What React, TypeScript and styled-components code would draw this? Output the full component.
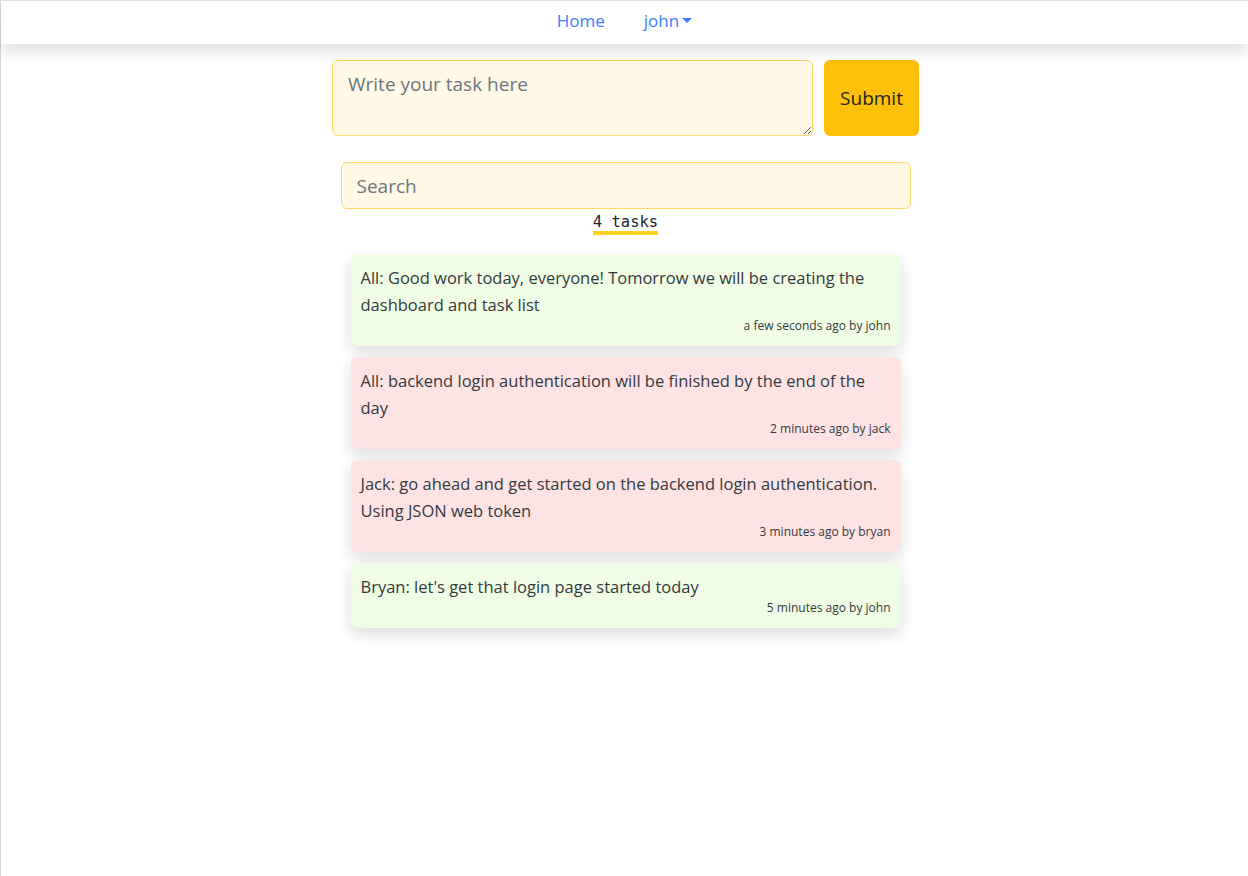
import React from "react";
import styled, { createGlobalStyle } from "styled-components";

const Global = createGlobalStyle`
  html, body { margin: 0; padding: 0; background: #fff; }
  body { font-family: "Open Sans", "Noto Sans", sans-serif; color: #212529; }
  * { box-sizing: border-box; }
`;

const Page = styled.div`
  min-height: 876px;
  border-left: 1px solid #d4d4d4;
  border-top: 1px solid #e2e2e2;
`;

const NavBar = styled.nav`
  height: 43px;
  display: flex;
  justify-content: center;
  align-items: center;
  gap: 39px;
  padding-bottom: 5px;
  background: #fff;
  box-shadow: 0 8px 16px rgba(0, 0, 0, 0.12);
  position: relative;
`;

const NavLink = styled.a`
  color: #3d7cff;
  font-size: 17px;
  text-decoration: none;
  display: flex;
  align-items: center;
  gap: 3px;
`;

const Caret = styled.span`
  display: inline-block;
  width: 0;
  height: 0;
  border-left: 5px solid transparent;
  border-right: 5px solid transparent;
  border-top: 5px solid #3d7cff;
  margin-top: 1px;
`;

const Main = styled.main`
  display: flex;
  flex-direction: column;
  align-items: center;
  padding-top: 16px;
`;

const FormRow = styled.form`
  display: flex;
  gap: 11px;
  width: 587px;
  margin-left: 2px;
`;

const TaskInput = styled.textarea`
  flex: 1;
  height: 76px;
  background: #fff9e6;
  border: 1px solid #ffd966;
  border-radius: 6px;
  padding: 10px 15px;
  font-family: inherit;
  font-size: 19px;
  color: #333;
  &::placeholder { color: #6c757d; }
`;

const SubmitButton = styled.button`
  width: 95px;
  height: 76px;
  background: #ffc107;
  border: none;
  border-radius: 6px;
  font-family: inherit;
  font-size: 19px;
  color: #212529;
`;

const SearchInput = styled.input`
  margin-top: 26px;
  width: 570px;
  height: 47px;
  margin-left: 2px;
  background: #fff9e6;
  border: 1px solid #ffd966;
  border-radius: 6px;
  padding: 0 15px;
  font-family: inherit;
  font-size: 19px;
  &::placeholder { color: #6c757d; }
`;

const Count = styled.div`
  margin-top: 5px;
  margin-left: 2px;
  font-family: "DejaVu Sans Mono", "Liberation Mono", monospace;
  font-size: 15.5px;
  line-height: 17px;
  color: #212529;
  border-bottom: 4px solid #ffd21f;
`;

const List = styled.div`
  margin-top: 19px;
  width: 550px;
  margin-left: 2px;
  display: flex;
  flex-direction: column;
  gap: 11px;
`;

const Card = styled.div<{ $tone: "green" | "red" }>`
  background: ${(p) => (p.$tone === "green" ? "#f0fde4" : "#fde3e3")};
  border-radius: 7px;
  padding: 10px 10px 12px 10px;
  box-shadow: 0 6px 16px rgba(0, 0, 0, 0.14);
  color: #343a40;
`;

const CardText = styled.div`
  font-size: 16.5px;
  line-height: 27px;
`;

const Meta = styled.div`
  text-align: right;
  font-size: 12px;
  line-height: 16px;
  color: #343a40;
`;

const tasks: { text: string; meta: string; tone: "green" | "red" }[] = [
  {
    text: "All: Good work today, everyone! Tomorrow we will be creating the dashboard and task list",
    meta: "a few seconds ago by john",
    tone: "green",
  },
  {
    text: "All: backend login authentication will be finished by the end of the day",
    meta: "2 minutes ago by jack",
    tone: "red",
  },
  {
    text: "Jack: go ahead and get started on the backend login authentication. Using JSON web token",
    meta: "3 minutes ago by bryan",
    tone: "red",
  },
  {
    text: "Bryan: let's get that login page started today",
    meta: "5 minutes ago by john",
    tone: "green",
  },
];

export default function App() {
  return (
    <Page>
      <Global />
      <NavBar>
        <NavLink href="#">Home</NavLink>
        <NavLink href="#">
          john <Caret />
        </NavLink>
      </NavBar>
      <Main>
        <FormRow onSubmit={(e) => e.preventDefault()}>
          <TaskInput placeholder="Write your task here" />
          <SubmitButton type="submit">Submit</SubmitButton>
        </FormRow>
        <SearchInput placeholder="Search" />
        <Count>4 tasks</Count>
        <List>
          {tasks.map((t, i) => (
            <Card key={i} $tone={t.tone}>
              <CardText>{t.text}</CardText>
              <Meta>{t.meta}</Meta>
            </Card>
          ))}
        </List>
      </Main>
    </Page>
  );
}
